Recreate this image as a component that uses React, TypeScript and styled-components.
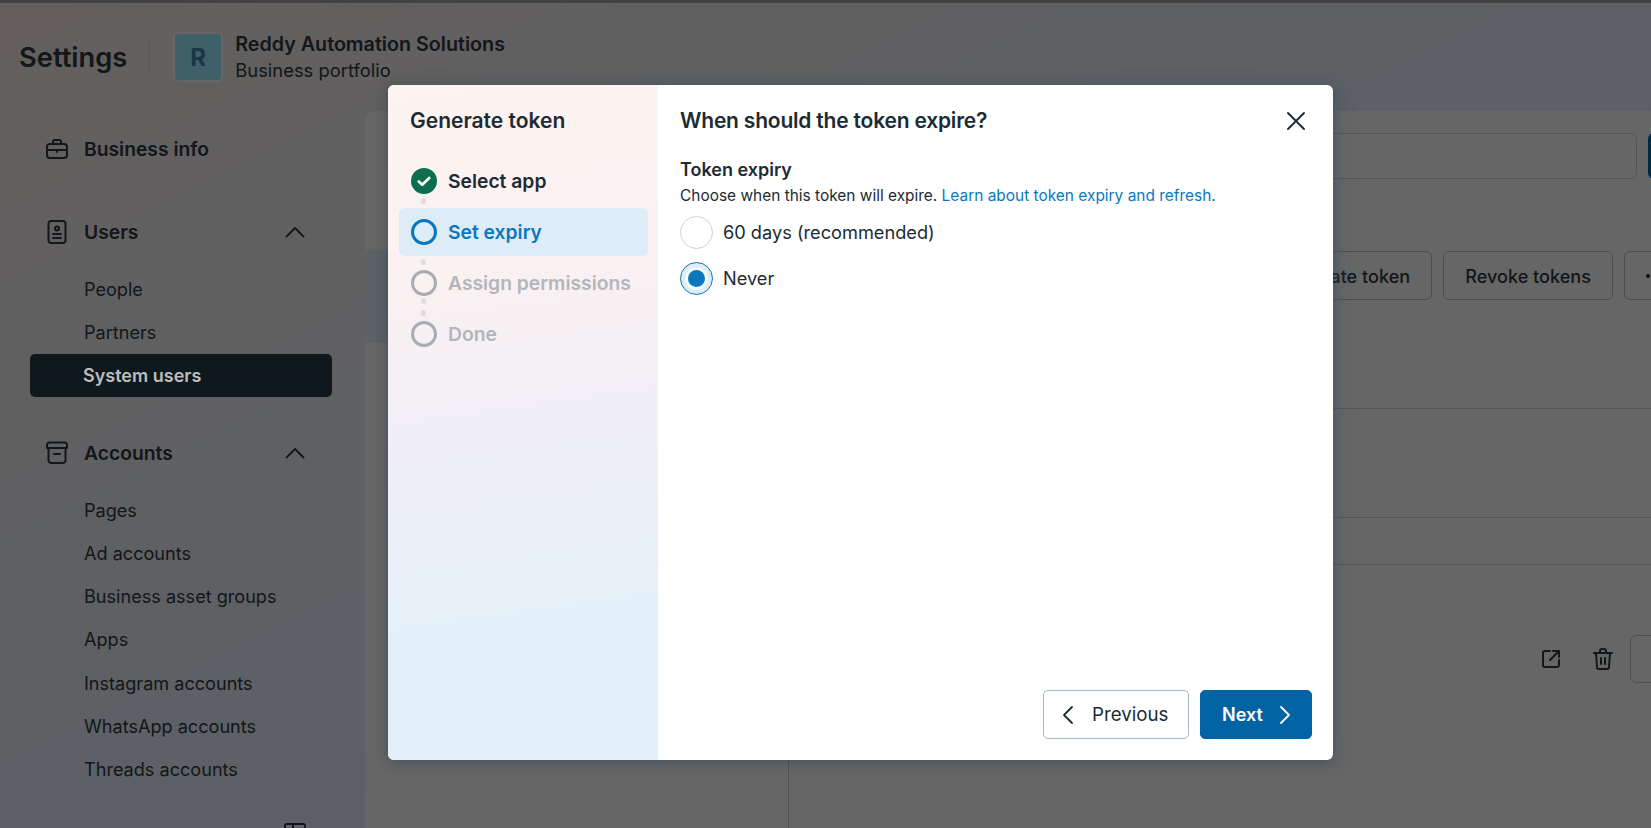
import React from 'react';
import styled, {createGlobalStyle} from 'styled-components';

const GlobalStyle = createGlobalStyle`
  html, body {
    margin: 0;
    height: 100%;
    overflow: hidden;
  }
  body {
    font-family: Inter, "Noto Sans", "Liberation Sans", sans-serif;
    color: #2f3a42;
  }
  * {
    box-sizing: border-box;
  }
`;

const Page = styled.div`
  position: relative;
  height: 100vh;
  display: flex;
  flex-direction: column;
  overflow: hidden;
  border-top: 3px solid #424242;
  background: linear-gradient(to bottom right, #faeeea 0%, #e8f1fb 50%, #e4f1fb 100%);
`;

const Header = styled.header`
  height: 108px;
  flex-shrink: 0;
  display: flex;
  align-items: center;
  padding: 0 0 0 19px;
`;

const PageTitle = styled.h1`
  margin: 2px 22px 0 0;
  font-size: 27.3px;
  line-height: 32px;
  font-weight: 600;
`;

const HeaderDivider = styled.div`
  width: 1px;
  height: 32px;
  margin-right: 23px;
  background: #d9d9d9;
`;

const Avatar = styled.div`
  width: 50px;
  height: 50px;
  margin-right: 12px;
  display: flex;
  align-items: center;
  justify-content: center;
  border: 2px solid #fff;
  border-radius: 5px;
  background: #9ff0ff;
  color: #3a8ab8;
  font-size: 24px;
  font-weight: 700;
`;

const PortfolioName = styled.div`
  font-size: 19.7px;
  line-height: 26px;
  font-weight: 600;
`;

const PortfolioType = styled.div`
  font-size: 18.4px;
  line-height: 26px;
`;

const Body = styled.div`
  flex: 1;
  min-height: 0;
  display: flex;
`;

const Sidebar = styled.nav`
  width: 365px;
  flex-shrink: 0;
  padding: 16px 33px 0 30px;
`;

const GroupHeader = styled.div<{$gap: number}>`
  height: 44px;
  margin-bottom: ${(p) => p.$gap}px;
  display: flex;
  align-items: center;
  padding: 0 25px 0 15px;
  font-size: 19.3px;
  font-weight: 600;
  svg:first-child {
    width: 24px;
    height: 24px;
    margin-right: 15px;
  }
  span {
    flex: 1;
  }
`;

const NavItem = styled.div<{$active?: boolean}>`
  height: 41px;
  margin-bottom: 2.2px;
  display: flex;
  align-items: center;
  padding-left: 54px;
  border-radius: 5px;
  font-size: 18.1px;
  ${(p) =>
    p.$active &&
    `
    position: relative;
    z-index: 2;
    margin-bottom: 0;
    height: 43px;
    background: #0f181c;
    color: #bcbcbc;
    font-size: 18px;
    font-weight: 600;
    padding-left: 53px;
  `}
`;

const Group = styled.div<{$after: number}>`
  margin-bottom: ${(p) => p.$after}px;
`;

const CollapseIcon = styled.div`
  display: flex;
  justify-content: flex-end;
  padding: 30px 25px 0 0;
`;

const MainPanel = styled.main`
  flex: 1;
  min-width: 0;
  display: flex;
  border-top-left-radius: 8px;
  background: #fff;
  overflow: hidden;
`;

const ListColumn = styled.div`
  width: 424px;
  flex-shrink: 0;
  padding-top: 139px;
  border-right: 1px solid #c8ccd0;
`;

const SelectedRow = styled.div`
  height: 93px;
  background: #e6f6ff;
`;

const DetailColumn = styled.div`
  flex: 1;
  min-width: 0;
  display: flex;
  flex-direction: column;
`;

const SearchRow = styled.div`
  height: 46px;
  margin-top: 22px;
  display: flex;
  gap: 11px;
  margin-right: -30px;
`;

const SearchInput = styled.div`
  flex: 1;
  border: 1px solid #cfd2d5;
  border-radius: 6px;
`;

const PrimaryAction = styled.div`
  width: 33px;
  border-radius: 6px 0 0 6px;
  background: #0064a4;
`;

const ActionsRow = styled.div`
  height: 49px;
  margin-top: 72px;
  margin-right: -35px;
  display: flex;
  justify-content: flex-end;
  gap: 11px;
`;

const OutlineButton = styled.div`
  height: 49px;
  padding: 0 21px;
  display: flex;
  align-items: center;
  gap: 3px;
  border: 1px solid #bcc0c4;
  border-radius: 6px;
  font-size: 18.1px;
  font-weight: 500;
  white-space: nowrap;
`;

const DetailSection = styled.div<{$height: number}>`
  height: ${(p) => p.$height}px;
  border-bottom: 1px solid #d2d4d6;
`;

const AssetRow = styled.div`
  height: 48px;
  margin-top: 70px;
  margin-right: -30px;
  display: flex;
  align-items: center;
  justify-content: flex-end;
`;

const AssetIcon = styled.span`
  width: 24px;
  height: 24px;
  margin-right: 28px;
  display: flex;
`;

const AssetButton = styled.div`
  width: 51px;
  height: 48px;
  margin-left: -13px;
  border: 1px solid #bcc0c4;
  border-radius: 6px;
`;

const Dot = styled.i`
  width: 4px;
  height: 4px;
  border-radius: 50%;
  background: #2f3a42;
`;

/* dim layer and dialog */
const Backdrop = styled.div`
  position: absolute;
  inset: 0;
  z-index: 1;
  background: rgba(0, 0, 0, 0.6);
`;

const Dialog = styled.section`
  position: absolute;
  z-index: 3;
  left: 388px;
  top: 82px;
  width: 945px;
  height: 675px;
  display: flex;
  border-radius: 6px;
  overflow: hidden;
  background: #fff;
  box-shadow: 0 2px 14px rgba(20, 40, 60, 0.35), 6px 0 16px rgba(80, 110, 140, 0.3);
  color: #1c2b33;
`;

const StepPanel = styled.aside`
  width: 270px;
  flex-shrink: 0;
  padding: 20px 10px 0 11px;
  background: linear-gradient(172deg, #fdf3f0 0%, #fbf1f0 25%, #f1eff7 50%, #e4f0f9 78%, #e4f0f9 100%);
`;

const StepTitle = styled.h2`
  margin: 0 0 20px 11px;
  font-size: 21px;
  line-height: 32px;
  font-weight: 600;
`;

const StepList = styled.div`
  display: flex;
  flex-direction: column;
  gap: 3px;
`;

const Step = styled.div<{$state: 'done' | 'active' | 'todo'}>`
  position: relative;
  height: 48px;
  display: flex;
  align-items: center;
  gap: 11px;
  padding-left: 12px;
  border-radius: 6px;
  font-size: 19.3px;
  font-weight: 600;
  background: ${(p) => (p.$state === 'active' ? '#deecf8' : 'transparent')};
  color: ${(p) => (p.$state === 'active' ? '#0a78be' : p.$state === 'todo' ? '#b2b6bb' : '#1c2b33')};
`;

const StepRing = styled.span<{$state: 'active' | 'todo'}>`
  width: 26px;
  height: 26px;
  flex-shrink: 0;
  border-radius: 50%;
  border: 3px solid ${(p) => (p.$state === 'active' ? '#0a78be' : '#a8adb3')};
`;

const StepDot = styled.span<{$top: number}>`
  position: absolute;
  left: 21.5px;
  top: ${(p) => p.$top}px;
  width: 5.5px;
  height: 5.5px;
  border-radius: 50%;
  background: #dcdee2;
`;

const Content = styled.div`
  flex: 1;
  min-width: 0;
  display: flex;
  flex-direction: column;
  padding: 20px 21px 21px 22px;
`;

const ContentHeader = styled.div`
  display: flex;
  align-items: center;
  justify-content: space-between;
  margin-bottom: 21px;
`;

const ContentTitle = styled.h2`
  margin: 0;
  font-size: 21px;
  line-height: 32px;
  font-weight: 600;
  letter-spacing: -0.2px;
`;

const CloseButton = styled.button`
  width: 24px;
  height: 24px;
  margin-right: 4px;
  padding: 0;
  display: flex;
  border: 0;
  background: none;
  color: #1c2b33;
`;

const FieldLabel = styled.div`
  font-size: 18px;
  line-height: 24px;
  font-weight: 600;
`;

const FieldHelp = styled.div`
  margin: 3px 0 2px;
  font-size: 15.45px;
  line-height: 22px;
  a {
    color: #0a78be;
    text-decoration: none;
  }
`;

const RadioRow = styled.label`
  height: 46px;
  display: flex;
  align-items: center;
  gap: 10px;
  font-size: 18.2px;
`;

const RadioCircle = styled.span<{$checked?: boolean}>`
  width: 33px;
  height: 33px;
  flex-shrink: 0;
  display: flex;
  align-items: center;
  justify-content: center;
  border-radius: 50%;
  border: 1px solid ${(p) => (p.$checked ? '#0a78be' : '#cbd2d9')};
  background: ${(p) => (p.$checked ? '#dcedf9' : '#fff')};
  &::after {
    content: '';
    display: ${(p) => (p.$checked ? 'block' : 'none')};
    width: 17px;
    height: 17px;
    border-radius: 50%;
    background: #0a78be;
    box-shadow: 0 0 0 3px #f6fbfe;
  }
`;

const Footer = styled.div`
  margin-top: auto;
  display: flex;
  justify-content: flex-end;
  gap: 11px;
`;

const FooterButton = styled.button<{$primary?: boolean}>`
  height: 49px;
  display: flex;
  align-items: center;
  justify-content: flex-start;
  padding: 0 0 0 ${(p) => (p.$primary ? 21 : 12)}px;
  gap: ${(p) => (p.$primary ? 10 : 12)}px;
  width: ${(p) => (p.$primary ? 112 : 146)}px;
  border-radius: 5px;
  border: 1px solid ${(p) => (p.$primary ? '#0263a4' : '#a8b8c8')};
  background: ${(p) => (p.$primary ? '#0263a4' : '#fff')};
  color: ${(p) => (p.$primary ? '#fff' : '#1c2b33')};
  font-family: inherit;
  font-size: ${(p) => (p.$primary ? 18 : 18.7)}px;
  font-weight: ${(p) => (p.$primary ? 600 : 400)};
`;

const Icon = ({children, size = 24, sw = 2}: {children: React.ReactNode; size?: number; sw?: number}) => (
    <svg width={size} height={size} viewBox="0 0 24 24" fill="none" stroke="currentColor" strokeWidth={sw} strokeLinecap="round" strokeLinejoin="round" style={{flexShrink: 0}}>
        {children}
    </svg>
);

const Chevron = ({d}: {d: string}) => (
    <Icon sw={1.8}><path d={d}/></Icon>
);

const accountItems = ['Pages', 'Ad accounts', 'Business asset groups', 'Apps', 'Instagram accounts', 'WhatsApp accounts', 'Threads accounts'];

const App = () => {
    return (
        <Page>
            <GlobalStyle/>
            <Header>
                <PageTitle>Settings</PageTitle>
                <HeaderDivider/>
                <Avatar>R</Avatar>
                <div>
                    <PortfolioName>Reddy Automation Solutions</PortfolioName>
                    <PortfolioType>Business portfolio</PortfolioType>
                </div>
            </Header>
            <Body>
                <Sidebar>
                    <Group $after={39}>
                        <GroupHeader $gap={0}>
                            <Icon>
                                <rect x="2" y="7" width="20" height="14" rx="3"/>
                                <path d="M8 7V5a2 2 0 0 1 2-2h4a2 2 0 0 1 2 2v2M2 13h20M12 13v2"/>
                            </Icon>
                            <span>Business info</span>
                        </GroupHeader>
                    </Group>
                    <Group $after={34}>
                        <GroupHeader $gap={14}>
                            <Icon>
                                <rect x="3.5" y="1" width="17" height="22" rx="3"/>
                                <circle cx="12" cy="8.5" r="2"/>
                                <path d="M8 14h8M8 18h8"/>
                            </Icon>
                            <span>Users</span>
                            <Chevron d="M3.5 16.5L12 8l8.5 8.5"/>
                        </GroupHeader>
                        <NavItem>People</NavItem>
                        <NavItem>Partners</NavItem>
                        <NavItem $active>System users</NavItem>
                    </Group>
                    <Group $after={0}>
                        <GroupHeader $gap={14}>
                            <Icon>
                                <path d="M4.5 1.5h15a2.5 2.5 0 0 1 2.5 2.5v3H2V4a2.5 2.5 0 0 1 2.5-2.5z"/>
                                <path d="M3.5 7v12a3 3 0 0 0 3 3h11a3 3 0 0 0 3-3V7M9 13h6"/>
                            </Icon>
                            <span>Accounts</span>
                            <Chevron d="M3.5 16.5L12 8l8.5 8.5"/>
                        </GroupHeader>
                        {accountItems.map((item) => (
                            <NavItem key={item}>{item}</NavItem>
                        ))}
                        <CollapseIcon>
                            <Icon>
                                <rect x="2" y="2" width="20" height="20" rx="2"/>
                                <path d="M2 9h20M10 2v7"/>
                            </Icon>
                        </CollapseIcon>
                    </Group>
                </Sidebar>
                <MainPanel>
                    <ListColumn>
                        <SelectedRow/>
                    </ListColumn>
                    <DetailColumn>
                        <SearchRow>
                            <SearchInput/>
                            <PrimaryAction/>
                        </SearchRow>
                        <ActionsRow>
                            <OutlineButton>Generate token</OutlineButton>
                            <OutlineButton>Revoke tokens</OutlineButton>
                            <OutlineButton><Dot/><Dot/><Dot/></OutlineButton>
                        </ActionsRow>
                        <DetailSection $height={109}/>
                        <DetailSection $height={109}/>
                        <DetailSection $height={47}/>
                        <AssetRow>
                            <AssetIcon>
                                <Icon>
                                    <path d="M11 4H6a2 2 0 0 0-2 2v12a2 2 0 0 0 2 2h12a2 2 0 0 0 2-2v-5"/>
                                    <path d="M14 4h6v6M20 4l-9 9"/>
                                </Icon>
                            </AssetIcon>
                            <AssetIcon>
                                <Icon>
                                    <path d="M3 6h18M9 6V4a2 2 0 0 1 2-2h2a2 2 0 0 1 2 2v2"/>
                                    <path d="M5 6l1 14a2 2 0 0 0 2 2h8a2 2 0 0 0 2-2l1-14M10 11v6M14 11v6"/>
                                </Icon>
                            </AssetIcon>
                            <AssetButton/>
                        </AssetRow>
                    </DetailColumn>
                </MainPanel>
            </Body>
            <Backdrop/>
            <Dialog>
                <StepPanel>
                    <StepTitle>Generate token</StepTitle>
                    <StepList>
                        <Step $state="done">
                            <svg width="26" height="26" viewBox="0 0 26 26" style={{flexShrink: 0}}>
                                <circle cx="13" cy="13" r="13" fill="#0b6e4f"/>
                                <path d="M7.8 13.5l3.4 3.2L18.2 10" fill="none" stroke="#fff" strokeWidth="2.8" strokeLinecap="round" strokeLinejoin="round"/>
                            </svg>
                            Select app
                            <StepDot $top={41}/>
                        </Step>
                        <Step $state="active"><StepRing $state="active"/>Set expiry</Step>
                        <Step $state="todo">
                            <StepRing $state="todo"/>Assign permissions
                            <StepDot $top={0}/>
                            <StepDot $top={39}/>
                        </Step>
                        <Step $state="todo">
                            <StepRing $state="todo"/>Done
                            <StepDot $top={0}/>
                        </Step>
                    </StepList>
                </StepPanel>
                <Content>
                    <ContentHeader>
                        <ContentTitle>When should the token expire?</ContentTitle>
                        <CloseButton aria-label="Close">
                            <Icon sw={1.9}><path d="M4 4l16 16M20 4L4 20"/></Icon>
                        </CloseButton>
                    </ContentHeader>
                    <FieldLabel>Token expiry</FieldLabel>
                    <FieldHelp>
                        Choose when this token will expire. <a href="#expiry">Learn about token expiry and refresh.</a>
                    </FieldHelp>
                    <RadioRow><RadioCircle/>60 days (recommended)</RadioRow>
                    <RadioRow><RadioCircle $checked/>Never</RadioRow>
                    <Footer>
                        <FooterButton>
                            <Chevron d="M16 4l-8 8 8 8"/>
                            Previous
                        </FooterButton>
                        <FooterButton $primary>
                            Next
                            <Chevron d="M8 4l8 8-8 8"/>
                        </FooterButton>
                    </Footer>
                </Content>
            </Dialog>
        </Page>
    );
};

export default App;
